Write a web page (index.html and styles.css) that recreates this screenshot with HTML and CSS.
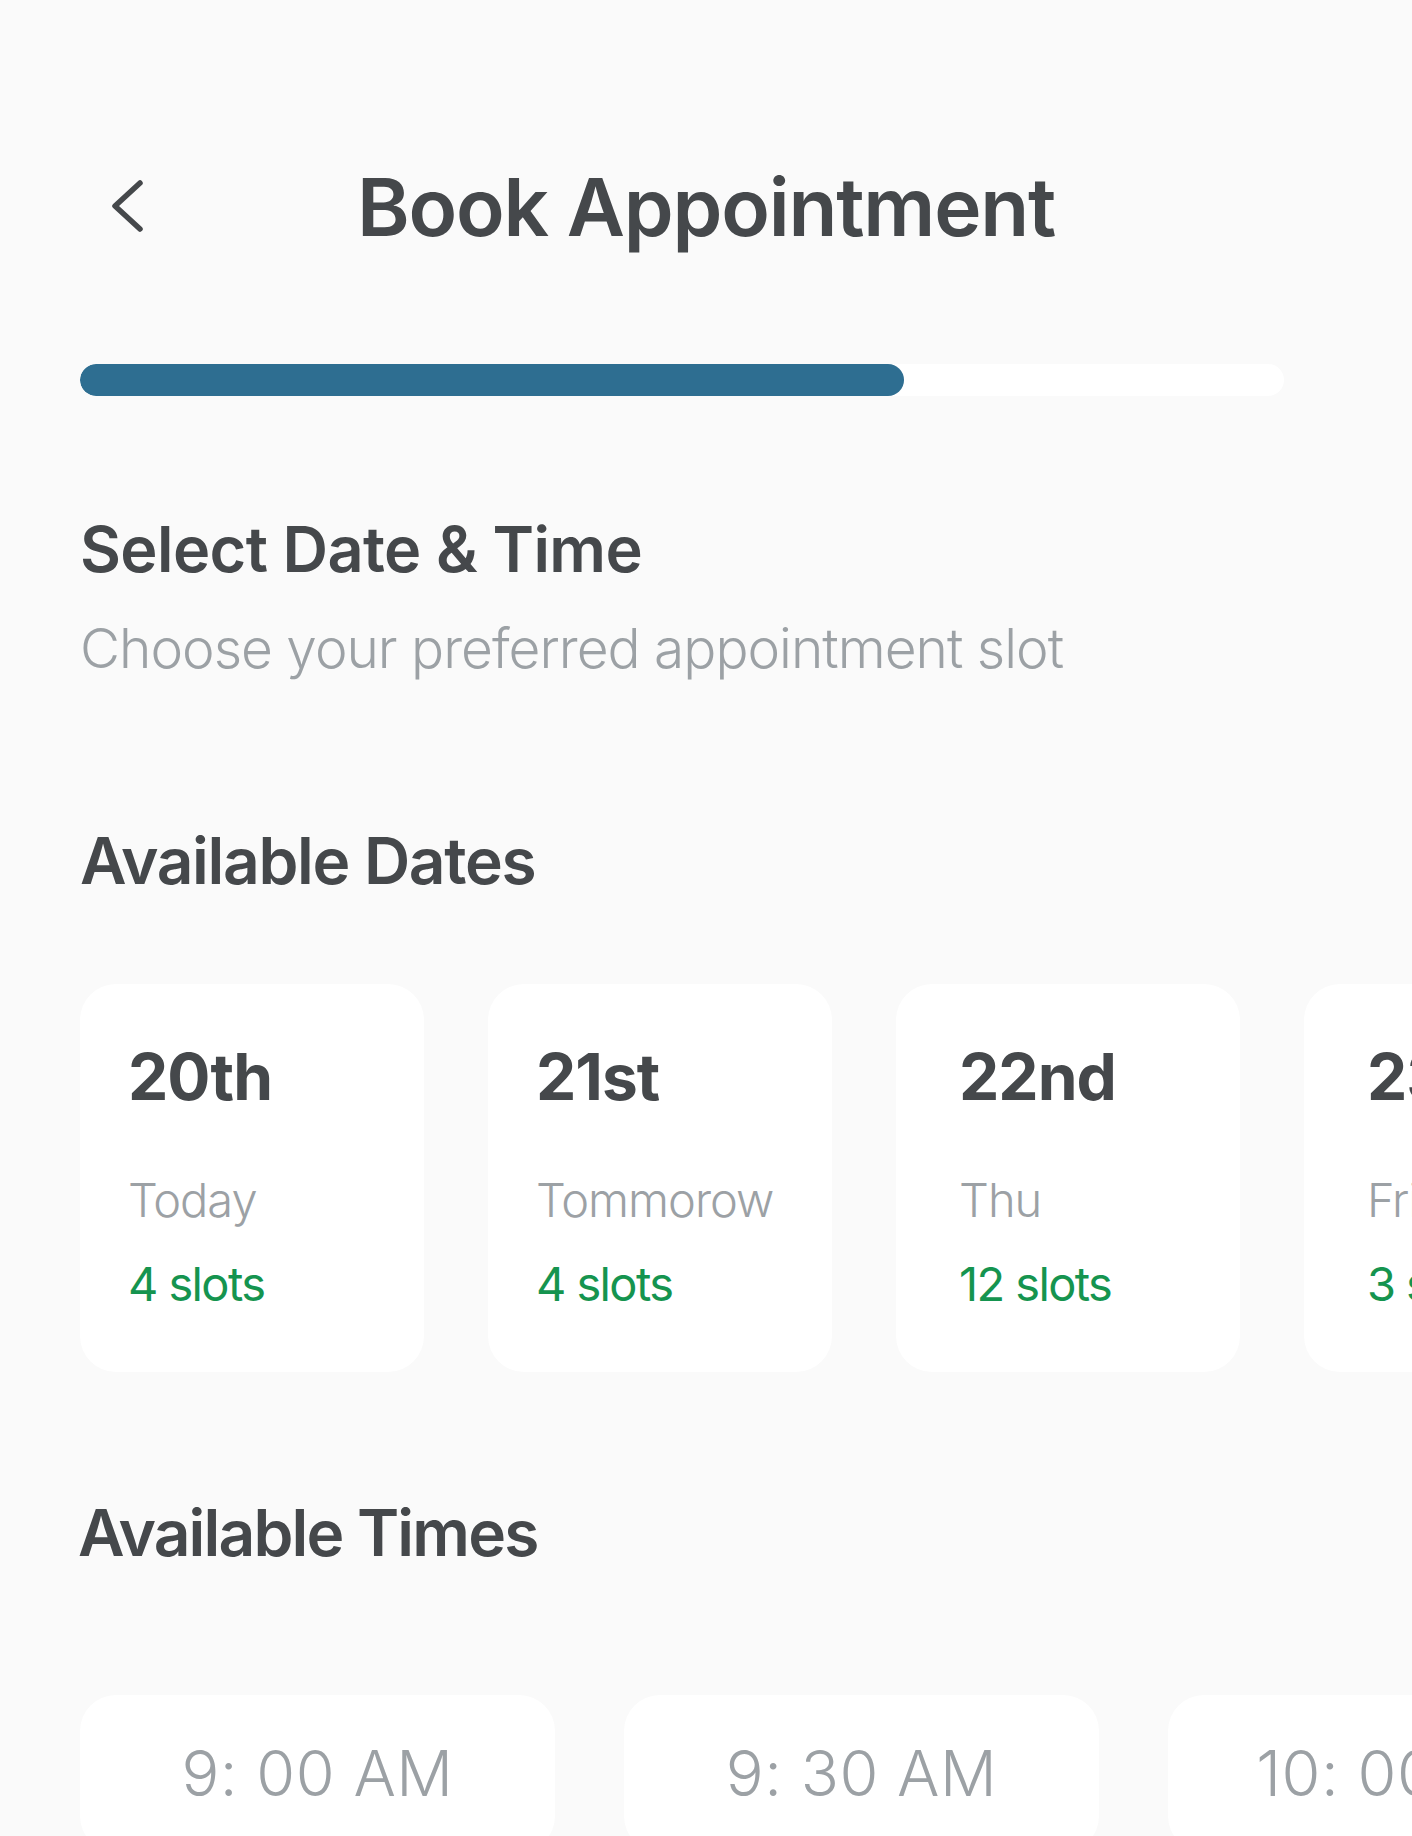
FILE: index.html
```html
<!DOCTYPE html>
<html lang="en">
<head>
<meta charset="utf-8">
<title>Book Appointment</title>
<link rel="stylesheet" href="styles.css">
</head>
<body>
<main class="page">
  <header class="topbar">
    <button class="back" aria-label="Back">
      <svg class="back-icon" width="40" height="60" viewBox="0 0 40 60" fill="none">
        <polyline points="34,6 9,29 34,52" stroke="#45484b" stroke-width="5.5" stroke-linecap="round" stroke-linejoin="round"/>
      </svg>
    </button>
    <h1 class="title">Book Appointment</h1>
    <span></span>
  </header>

  <div class="progress"><div class="progress-fill" style="width: 68.4%"></div></div>

  <h2 class="section-title">Select Date &amp; Time</h2>
  <p class="subtitle">Choose your preferred appointment slot</p>

  <h3 class="group-title">Available Dates</h3>
  <div class="date-row">
    <div class="date-card">
      <div class="date-num">20th</div>
      <div class="date-day">Today</div>
      <div class="date-slots">4 slots</div>
    </div>
    <div class="date-card">
      <div class="date-num">21st</div>
      <div class="date-day">Tommorow</div>
      <div class="date-slots">4 slots</div>
    </div>
    <div class="date-card date-card--wide">
      <div class="date-num">22nd</div>
      <div class="date-day">Thu</div>
      <div class="date-slots">12 slots</div>
    </div>
    <div class="date-card date-card--wide">
      <div class="date-num">23rd</div>
      <div class="date-day">Fri</div>
      <div class="date-slots">3 slots</div>
    </div>
  </div>

  <h3 class="group-title group-title--times">Available Times</h3>
  <div class="time-row">
    <div class="time-card">9: 00 AM</div>
    <div class="time-card">9: 30 AM</div>
    <div class="time-card">10: 00 AM</div>
  </div>
</main>
</body>
</html>
```
FILE: styles.css
```css
html, body {
  margin: 0;
  padding: 0;
  overflow: hidden;
  background: #fafafa;
}
body {
  font-family: Inter, "Noto Sans", sans-serif;
  color: #45484b;
  width: 1412px;
  height: 1836px;
}
.page {
  padding: 166px 80px 0 80px;
}
.topbar {
  display: grid;
  grid-template-columns: 1fr auto 1fr;
  align-items: center;
  height: 81px;
}
.back {
  border: 0;
  background: none;
  padding: 0;
  margin-left: 26px;
  width: 40px;
  height: 60px;
  justify-self: start;
  display: flex;
}
.back-icon {
  display: block;
}
.title {
  margin: 0;
  font-size: 80px;
  line-height: 81px;
  font-weight: 600;
  letter-spacing: -1.2px;
  white-space: nowrap;
}
.progress {
  margin-top: 117px;
  height: 32px;
  width: 1204px;
  border-radius: 16px;
  background: #ffffff;
  overflow: hidden;
}
.progress-fill {
  height: 100%;
  border-radius: 16px;
  background: #2e6e91;
}
.section-title {
  margin: 122px 0 0 0;
  font-size: 63px;
  line-height: 63px;
  font-weight: 600;
  letter-spacing: -0.6px;
}
.subtitle {
  margin: 40px 0 0 0;
  font-size: 55px;
  line-height: 55px;
  font-weight: 300;
  letter-spacing: -1px;
  color: #9ca1a5;
  white-space: nowrap;
}
.group-title {
  margin: 153px 0 0 0;
  font-size: 64px;
  line-height: 64px;
  font-weight: 600;
  letter-spacing: -1.3px;
  white-space: nowrap;
}
.group-title--times {
  margin-top: 129px;
  margin-left: -2px;
  letter-spacing: -1.8px;
}
.date-row {
  margin-top: 91px;
  display: flex;
  gap: 64px;
}
.date-card {
  flex: 0 0 344px;
  box-sizing: border-box;
  height: 388px;
  padding: 61px 20px 0 48px;
  background: #ffffff;
  border-radius: 36px;
  display: flex;
  flex-direction: column;
  white-space: nowrap;
}
.date-card--wide {
  padding-left: 63px;
}
.date-num {
  font-size: 64px;
  line-height: 64px;
  font-weight: 700;
  letter-spacing: -1px;
}
.date-day {
  margin-top: 67px;
  font-size: 47px;
  line-height: 47px;
  font-weight: 300;
  letter-spacing: -1px;
  color: #9ca1a5;
}
.date-slots {
  margin-top: 37px;
  font-size: 47px;
  line-height: 47px;
  font-weight: 400;
  letter-spacing: -1.6px;
  color: #15944f;
}
.time-row {
  margin-top: 130px;
  display: flex;
  gap: 69px;
}
.time-card {
  flex: 0 0 475px;
  box-sizing: border-box;
  padding: 47px 0;
  background: #ffffff;
  border-radius: 36px;
  text-align: center;
  font-size: 63px;
  line-height: 63px;
  font-weight: 300;
  letter-spacing: 0.5px;
  color: #9ca1a5;
  white-space: nowrap;
}
```
